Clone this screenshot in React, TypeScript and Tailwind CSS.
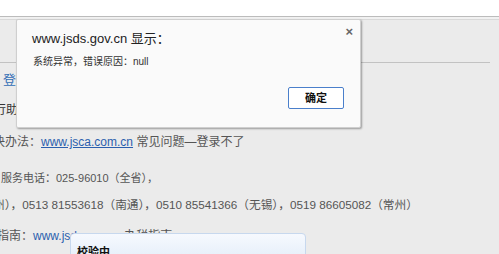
import React from "react";

const font = "font-['Liberation_Sans','Noto_Sans_CJK_SC',sans-serif]";

export default function App() {
    return (
        <div
            className={`relative w-[499px] h-[254px] overflow-hidden bg-[#ebebeb] ${font}`}
        >
            <div className="h-[17px] bg-white border-b border-[#bcbcbc]" />
            <div className="h-[3px] bg-[#f1f1f1] border-b border-[#d9d9d9]" />

            <div className="text-[12px] leading-[16px] text-[#555]">
                <div className="mt-[42px] h-px w-[490px] bg-[#c2c2c2]" />
                <div className="mt-[9px] text-[13px] text-[#2f6cb5] pl-[3px]">
                    登录
                </div>
                <div className="mt-[14px] -ml-[6px] text-[#333]">行助</div>
                <div className="mt-[16px] -ml-[7px] whitespace-nowrap">
                    决办法：
                    <span className="text-[#2b5fae] underline">
                        www.jsca.com.cn
                    </span>{" "}
                    常见问题—登录不了
                </div>
                <div className="mt-[20px] ml-[1px] whitespace-nowrap text-[11px]">
                    服务电话：025-96010（全省），
                </div>
                <div className="mt-[11px] -ml-[7px] whitespace-nowrap text-[11.7px]">
                    州），0513 81553618（南通），0510 85541366（无锡），0519
                    86605082（常州）
                </div>
                <div className="mt-[15px] -ml-[3px] whitespace-nowrap">
                    指南：<span className="text-[#2b5fae]">www.jsds.gov.cn</span>{" "}
                    办税指南
                </div>
            </div>

            {/* alert dialog */}
            <div className="absolute left-[16px] top-[19px] w-[345px] h-[109px] bg-[#fafafa] border border-[#cfcfcf] rounded-[2px] shadow-[1px_1px_2px_rgba(0,0,0,0.35)] flex flex-col">
                <div className="pt-[11px] pl-[15px] text-[13px] leading-[16px] text-[#222]">
                    www.jsds.gov.cn 显示：
                </div>
                <div className="mt-[9px] pl-[16px] text-[10px] leading-[12px] text-[#333]">
                    系统异常，错误原因：null
                </div>
                <button className="mt-[19px] self-end mr-[16px] w-[56px] h-[22px] bg-white border border-[#4a7fcb] rounded-[2px] text-[11px] text-[#111] font-semibold leading-none">
                    确定
                </button>
                <div className="absolute right-[7px] top-[6px] text-[#666] text-[13px] leading-[12px] font-bold">
                    ×
                </div>
            </div>

            {/* checking popup */}
            <div className="absolute left-[70px] top-[233px] w-[236px] h-[30px] rounded-t-[4px] border border-[#c7d8ee] bg-gradient-to-b from-[#f6f9fe] to-[#e3edf9] pl-[6px] pt-[5px]">
                <span className="text-[11px] leading-[14px] font-bold text-[#111]">
                    校验中
                </span>
            </div>
        </div>
    );
}
